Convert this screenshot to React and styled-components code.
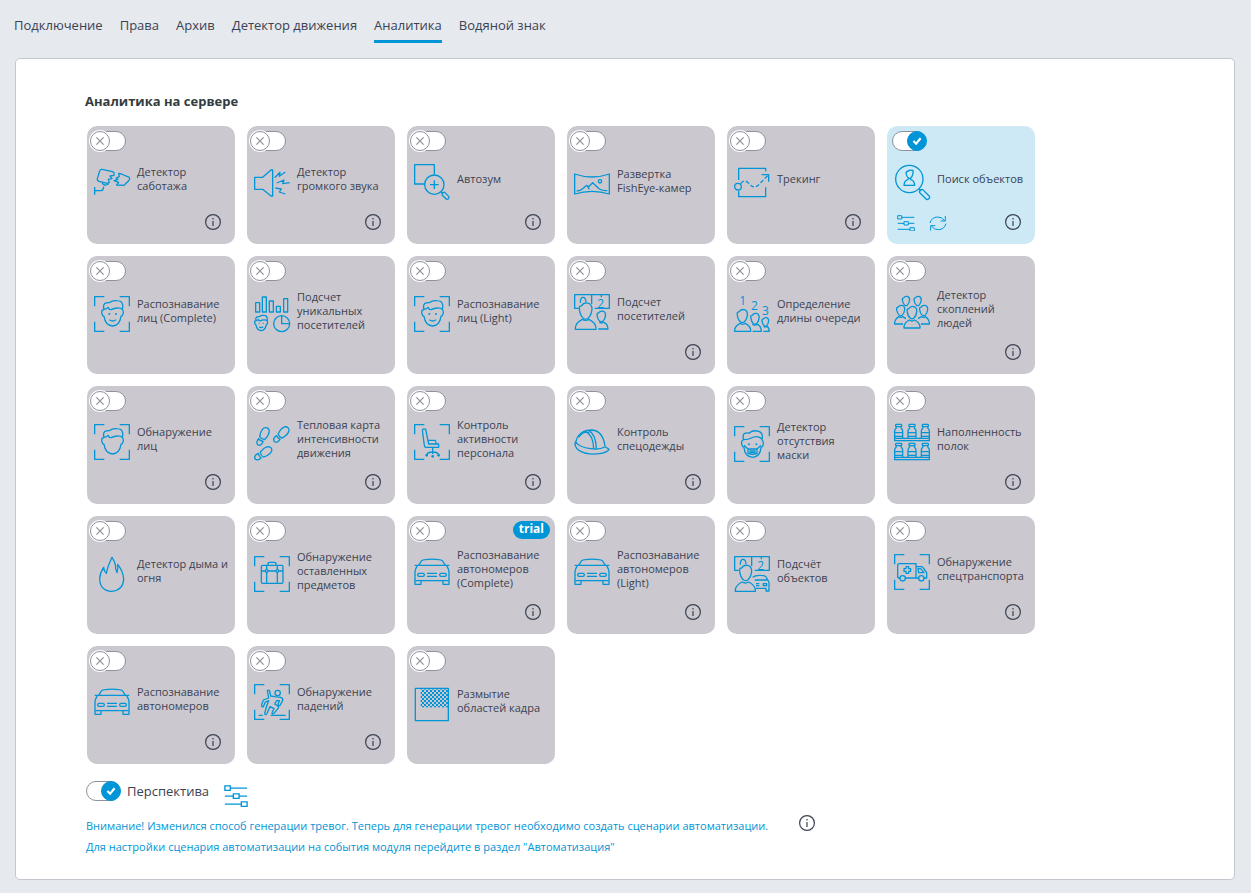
import { useState } from "react";
import styled, { createGlobalStyle, css } from "styled-components";

const v = {
    blue: "#0095d6",
    text: "#3b4252",
    heading: "#333c40",
    page: "#e6e9ee",
    card: "#cbc9cf",
    cardActive: "#cce9f5",
    border: "#c3c6cd",
    muted: "#8f929c",
    font: `"Open Sans", "Noto Sans", sans-serif`,
};

//#region ICONS
const Frame = () => (
    <path d="M2 31V2H31M77 2H106V31M106 77V106H77M31 106H2V77" />
);

const FaceOutline = () => (
    <>
        <path d="M30 40Q26 29 33 22Q40 19 46 20Q56 12 70 14Q84 15 86 26Q87 33 85 41" />
        <path d="M30 40Q38 39 42 34Q45 42 52 41Q60 37 70 36Q80 35 85 41" />
        <path d="M30 40Q22 42 23 50Q24 59 30 61Q34 88 56 90Q77 88 81 61Q87 59 88 50Q88 43 85 41" />
    </>
);

const Face = () => (
    <>
        <FaceOutline />
        <circle className="dot" cx="46" cy="54" r="3" />
        <circle className="dot" cx="66" cy="54" r="3" />
        <path d="M46 71Q56 79 66 71" />
    </>
);

const Head = ({ x, y, w }) => (
    <path
        transform={`translate(${x - w / 2} ${y}) scale(${w / 20})`}
        d="M1 10Q0 5 4 5Q7 0 13 1Q19 2 19 10Q18 19 13 23Q10 25 7 23Q2 19 1 10Z"
    />
);

const Body = ({ x, y, w, h }) => (
    <path
        d={`M${x} ${y + h}V${y + h - 4}Q${x + 1} ${y + h / 3} ${x + w * 0.34} ${y}Q${x + w / 2} ${y + 6} ${x + w * 0.66} ${y}Q${x + w - 1} ${y + h / 3} ${x + w} ${y + h - 4}V${y + h}Z`}
    />
);

const Board = () => (
    <>
        <path d="M14 43H2V2H106V43H62M53 2V30M82 2V10" />
        <path d="M19 26Q19 10 27 10Q35 10 36 24" />
        <text x="70" y="41" fontSize="36">2</text>
    </>
);

const Car = () => (
    <>
        <path d="M14 34L22 21Q26 17 34 17Q54 14 74 17Q82 17 86 21L94 34" />
        <path d="M2 34H106M10 36Q4 44 3 52V91H21V80H87V91H105V52Q104 44 98 36M3 80H21M87 80H105" />
        <rect x="11" y="58" width="20" height="9" rx="4" />
        <rect x="77" y="58" width="20" height="9" rx="4" />
        <path d="M39 58H69M39 67H69" />
    </>
);

const Bottle = ({ x, y }) => (
    <g transform={`translate(${x} ${y})`}>
        <rect x="4" y="1" width="18" height="7" rx="2" />
        <path d="M6 8Q6 13 3 16Q1 18 1 22V42M20 8Q20 13 23 16Q25 18 25 22V42M1 26H25M1 37H25" />
    </g>
);

const Footprint = ({ x, y, angle }) => (
    <g transform={`translate(${x} ${y}) rotate(${angle})`}>
        <path d="M-8 14Q-15 -4 -10 -15Q-2 -25 7 -17Q15 -6 9 14Q0 18 -8 14Z" />
        <path d="M-8 21Q0 24 8 21Q11 36 0 38Q-10 36 -8 21Z" />
    </g>
);

const icons = {
    camera: (
        <>
            <path d="M24 16Q19 15 17 21L10 44Q9 51 15 52L40 58L46 55L43 46L54 44L48 36L60 34V26L56 23Z" />
            <path d="M74 28L82 30L106 40Q109 45 104 50L90 64L68 63L74 55L60 50L72 46L66 42L76 38Z" />
            <path d="M2 69V92M2 80H22Q28 79 29 68M24 56Q30 68 44 60" />
        </>
    ),
    speaker: (
        <>
            <path d="M2 40H26L51 18H56V96H51L26 76H2Z" />
            <path d="M62 41L78 25L76 37L94 24M68 57L90 48L86 59L107 56M64 72L82 75L76 84L94 90" />
        </>
    ),
    zoom: (
        <>
            <path d="M32 60H2V2H61V32M61 49V75M48 62H74M81 84L86 89" />
            <circle cx="61" cy="62" r="29" />
            <rect x="-12" y="-5" width="24" height="11" rx="5" transform="translate(95 95) rotate(45)" />
        </>
    ),
    fisheye: (
        <>
            <path d="M2 24Q54 42 106 24V84Q54 68 2 84Z" />
            <circle cx="78" cy="46" r="5" />
            <path d="M8 75Q20 75 26 68L38 58L44 62L56 50L76 69Q86 75 100 74M40 60L46 70" />
        </>
    ),
    tracking: (
        <>
            <path d="M14 48V13H95V22M14 82V98H95V70M83 32H104V53" />
            <circle cx="12" cy="68" r="10" />
            <path strokeDasharray="4 2" d="M20 59Q32 44 44 58Q62 80 80 56L103 33" />
        </>
    ),
    search: (
        <>
            <circle cx="46" cy="45" r="41" />
            <path d="M36 27Q37 22 43 21Q46 17 52 19H57V29Q55 39 49 43H44Q37 38 36 27Z" />
            <path d="M42 43V47Q31 49 30 64H62Q61 49 50 47V43M74 74L82 81" />
            <rect x="-18" y="-6" width="36" height="13" rx="5" transform="translate(92 91) rotate(45)" />
        </>
    ),
    face: (
        <>
            <Frame />
            <Face />
        </>
    ),
    stats: (
        <>
            <path d="M5 48V20H17V48ZM25 48V3H37V48ZM46 48V15H58V48ZM67 48V31H79V48ZM89 48V8H101V48Z" />
            <g transform="translate(-12 50) scale(0.6)">
                <Face />
            </g>
            <circle cx="83" cy="83" r="24" />
            <path d="M83 59V83H107" />
        </>
    ),
    visitors: (
        <>
            <Board />
            <Head x={35} y={25} w={42} />
            <Body x={4} y={76} w={62} h={30} />
            <Head x={82} y={50} w={28} />
            <path d="M76 85Q82 89 88 85Q101 88 102 105H73" />
        </>
    ),
    queue: (
        <>
            <text x="16" y="28" fontSize="36">1</text>
            <text x="51" y="42" fontSize="36">2</text>
            <text x="84" y="56" fontSize="36">3</text>
            <Head x={25} y={39} w={34} />
            <Body x={2} y={82} w={48} h={24} />
            <Head x={63} y={51} w={28} />
            <path d="M55 85Q63 89 71 85Q81 90 82 106H56" />
            <Head x={94} y={64} w={22} />
            <path d="M89 91Q94 94 99 91Q105 94 106 106H88" />
        </>
    ),
    crowd: (
        <>
            <Head x={36} y={6} w={24} />
            <Head x={71} y={6} w={24} />
            <Head x={20} y={33} w={27} />
            <Head x={89} y={33} w={27} />
            <Head x={54} y={36} w={32} />
            <Body x={30} y={78} w={48} h={24} />
            <path d="M27 90H2V86Q4 74 14 68Q20 72 26 68L36 74M81 90H106V86Q104 74 94 68Q88 72 82 68L72 74" />
        </>
    ),
    faceBlank: (
        <>
            <Frame />
            <FaceOutline />
        </>
    ),
    footprints: (
        <>
            <Footprint x={31} y={30} angle={30} />
            <Footprint x={88} y={26} angle={46} />
            <Footprint x={35} y={84} angle={58} />
        </>
    ),
    chair: (
        <>
            <Frame />
            <path d="M25 18Q30 13 35 16L44 60H74V70H36Q32 70 31 64ZM42 49H64Q66 50 66 60M56 70V90M38 94Q39 84 56 84Q73 84 74 94" />
            <circle className="dot" cx="38" cy="94" r="4" />
            <circle className="dot" cx="56" cy="97" r="4" />
            <circle className="dot" cx="74" cy="94" r="4" />
        </>
    ),
    helmet: (
        <>
            <path d="M5 56Q8 38 22 27Q34 18 54 18Q86 20 93 66" />
            <path d="M5 52Q-2 68 16 80Q40 94 76 89Q98 86 105 76L93 68Q78 78 50 74Q16 70 5 54" />
            <path d="M34 22Q58 32 59 75M44 19Q66 30 67 75M14 40Q30 18 46 27" />
        </>
    ),
    mask: (
        <>
            <Frame />
            <path d="M29 41Q24 29 32 22Q40 20 46 21Q56 12 70 15Q84 17 85 30V40M29 41Q44 41 52 36Q66 28 78 35Q82 37 84 41" />
            <path d="M29 41Q21 44 23 55Q25 62 30 64Q32 92 56 94Q79 92 81 64Q88 62 88 53Q88 44 84 41" />
            <path d="M30 58L42 69H69L81 58M42 69V82Q56 88 69 82V69M46 75H65M46 80H65" />
            <circle className="dot" cx="45" cy="55" r="3" />
            <circle className="dot" cx="67" cy="55" r="3" />
        </>
    ),
    shelves: (
        <>
            {[0, 57].map((y) => (
                <g key={y}>
                    <Bottle x={1} y={y} />
                    <Bottle x={41} y={y} />
                    <Bottle x={81} y={y} />
                    <rect x="2" y={y + 43} width="104" height="7" />
                </g>
            ))}
        </>
    ),
    fire: (
        <path d="M53 106Q18 104 17 68Q18 50 29 34Q30 46 37 52Q40 34 54 4Q66 22 65 38L69 50Q73 36 71 25Q88 46 89 70Q87 104 53 106Z" />
    ),
    luggage: (
        <>
            <Frame />
            <path d="M42 28V22Q42 19 46 19H62Q66 19 66 22V28M22 45H34M42 45H66M74 45H87M38 28V41M38 49V82M70 28V41M70 49V82" />
            <rect x="22" y="28" width="65" height="54" rx="4" />
            <circle cx="38" cy="45" r="4" />
            <circle cx="70" cy="45" r="4" />
        </>
    ),
    car: <Car />,
    objects: (
        <>
            <Board />
            <Head x={35} y={26} w={40} />
            <Body x={4} y={78} w={60} h={28} />
            <path d="M56 64Q64 57 80 58Q94 58 97 64L101 72H62M101 72Q106 76 105 84V105H96V97H66M66 83H76M66 89H76M88 83H98V89H88Z" />
        </>
    ),
    ambulance: (
        <>
            <Frame />
            <path d="M18 72H14Q11 72 11 68V34Q11 29 16 29H66V72H34M66 38H82Q86 38 88 42L98 56V72H90M74 72H66M72 44H80L90 56H74Z" />
            <path d="M36 38H44V44H50V52H44V58H36V52H30V44H36Z" />
            <circle cx="26" cy="73" r="8" />
            <circle cx="82" cy="73" r="8" />
        </>
    ),
    fall: (
        <>
            <Frame />
            <circle cx="71" cy="27" r="8" />
            <path d="M40 20Q44 16 47 21L50 36L62 38L80 40Q88 42 86 50L78 64Q73 66 72 61L76 50L68 50L62 60L72 66Q76 70 70 76L60 88Q54 92 54 86L60 74L48 68L38 90Q34 96 32 88L38 66L44 50L34 54L28 68Q22 70 23 62L28 48L44 42Z" />
            <path d="M14 94H26M50 94H95" />
        </>
    ),
    blur: (
        <>
            <defs>
                <pattern id="checker" width="12" height="12" patternUnits="userSpaceOnUse">
                    <path className="dot" d="M0 0H6V6H0ZM6 6H12V12H6Z" />
                </pattern>
            </defs>
            <rect x="4" y="7" width="99" height="97" />
            <rect className="fill" x="20" y="10" width="82" height="54" />
        </>
    ),
};

const SlidersIcon = () => (
    <svg viewBox="0 0 54 50" aria-hidden="true">
        <path d="M2 2H14V12H2ZM14 7H52M2 25H21M21 20H34V30H21ZM34 25H52M2 43H39M39 38H52V48H39Z" />
    </svg>
);

const RefreshIcon = () => (
    <svg viewBox="0 0 54 50" aria-hidden="true">
        <path d="M3 24Q8 7 25 6Q39 5 47 17M49 3V18H35M51 26Q46 43 29 44Q15 45 7 33M5 47V32H19" />
    </svg>
);
//#endregion

//#region DATA
const tabs = ["Подключение", "Права", "Архив", "Детектор движения", "Аналитика", "Водяной знак"];

const modules = [
    { title: "Детектор саботажа", icon: "camera", info: true },
    { title: "Детектор громкого звука", icon: "speaker", info: true },
    { title: "Автозум", icon: "zoom", info: true },
    { title: "Развертка FishEye-камер", icon: "fisheye" },
    { title: "Трекинг", icon: "tracking", info: true },
    { title: "Поиск объектов", icon: "search", info: true, enabled: true },
    { title: "Распознавание лиц (Complete)", icon: "face" },
    { title: "Подсчет уникальных посетителей", icon: "stats" },
    { title: "Распознавание лиц (Light)", icon: "face" },
    { title: "Подсчет посетителей", icon: "visitors", info: true },
    { title: "Определение длины очереди", icon: "queue" },
    { title: "Детектор скоплений людей", icon: "crowd", info: true },
    { title: "Обнаружение лиц", icon: "faceBlank", info: true },
    { title: "Тепловая карта интенсивности движения", icon: "footprints", info: true },
    { title: "Контроль активности персонала", icon: "chair", info: true },
    { title: "Контроль спецодежды", icon: "helmet", info: true },
    { title: "Детектор отсутствия\nмаски", icon: "mask" },
    { title: "Наполненность полок", icon: "shelves", info: true },
    { title: "Детектор дыма и огня", icon: "fire" },
    { title: "Обнаружение оставленных предметов", icon: "luggage" },
    { title: "Распознавание автономеров (Complete)", icon: "car", info: true, trial: true },
    { title: "Распознавание автономеров (Light)", icon: "car", info: true },
    { title: "Подсчёт объектов", icon: "objects" },
    { title: "Обнаружение спецтранспорта", icon: "ambulance", info: true },
    { title: "Распознавание автономеров", icon: "car", info: true },
    { title: "Обнаружение падений", icon: "fall", info: true },
    { title: "Размытие областей кадра", icon: "blur" },
];
//#endregion

function Switch({ id, checked, onChange }) {
    return (
        <SwitchBox>
            <SwitchInput id={id} type="checkbox" role="switch" checked={checked} onChange={onChange} />
            <Knob $on={checked}>
                <svg viewBox="0 0 20 20" aria-hidden="true">
                    {checked ? <path d="M6 10L9 13L14 7" /> : <path d="M6 6L14 14M14 6L6 14" />}
                </svg>
            </Knob>
        </SwitchBox>
    );
}

function InfoButton() {
    return (
        <Info type="button" aria-label="Информация">
            <svg viewBox="0 0 16 16" aria-hidden="true">
                <circle cx="8" cy="8" r="7.4" />
                <path d="M8 7V12M8 4V5.4" />
            </svg>
        </Info>
    );
}

function ModuleCard({ id, module, enabled, onToggle }) {
    return (
        <Card $active={enabled}>
            <CardHeader>
                <Switch id={id} checked={enabled} onChange={onToggle} />
                {module.trial && <Trial>trial</Trial>}
            </CardHeader>
            <CardBody>
                <ModuleIcon viewBox="0 0 108 108" aria-hidden="true">{icons[module.icon]}</ModuleIcon>
                <ModuleTitle htmlFor={id}>{module.title}</ModuleTitle>
            </CardBody>
            <CardFooter $info={module.info}>
                {enabled && (
                    <Tools>
                        <ToolButton type="button" aria-label="Настройки"><SlidersIcon /></ToolButton>
                        <ToolButton type="button" aria-label="Обновить"><RefreshIcon /></ToolButton>
                    </Tools>
                )}
                {module.info && <InfoButton />}
            </CardFooter>
        </Card>
    );
}

export default function App() {
    const [tab, setTab] = useState("Аналитика");
    const [enabled, setEnabled] = useState(modules.map((m) => Boolean(m.enabled)));
    const [perspective, setPerspective] = useState(true);

    const toggleModule = (index) => {
        setEnabled(enabled.map((value, i) => (i === index ? !value : value)));
    };

    return (
        <>
            <GlobalStyle />
            <Tabs>
                {tabs.map((name) => (
                    <Tab key={name} type="button" $active={name === tab} onClick={() => setTab(name)}>
                        {name}
                    </Tab>
                ))}
            </Tabs>
            <Panel>
                <Heading>Аналитика на сервере</Heading>
                <Grid>
                    {modules.map((module, i) => (
                        <ModuleCard
                            key={module.title}
                            id={`module-${i}`}
                            module={module}
                            enabled={enabled[i]}
                            onToggle={() => toggleModule(i)}
                        />
                    ))}
                </Grid>
                <Perspective>
                    <Switch id="perspective" checked={perspective} onChange={() => setPerspective(!perspective)} />
                    <PerspectiveLabel htmlFor="perspective">Перспектива</PerspectiveLabel>
                    <ToolButton type="button" $large aria-label="Настройки перспективы"><SlidersIcon /></ToolButton>
                </Perspective>
                <Notice>
                    <div>
                        <p>Внимание! Изменился способ генерации тревог. Теперь для генерации тревог необходимо создать сценарии автоматизации.</p>
                        <p>Для настройки сценария автоматизации на события модуля перейдите в раздел "Автоматизация"</p>
                    </div>
                    <InfoButton />
                </Notice>
            </Panel>
        </>
    );
}

//#region STYLED COMPONENTS
const GlobalStyle = createGlobalStyle`
*{
    box-sizing: border-box;
}
body{
    margin: 0;
    background: ${v.page};
    color: ${v.text};
    font-family: ${v.font};
}
button{
    padding: 0;
    border: none;
    background: none;
    color: inherit;
    font-family: inherit;
    cursor: pointer;
}
svg{
    display: block;
    fill: none;
}
`;
const Tabs = styled.nav`
    display: flex;
    gap: 17px;
    padding: 15px 14px;
`;
const Tab = styled.button`
    height: 28px;
    padding-bottom: 5px;
    font-size: 13px;
    line-height: 20px;
    border-bottom: 3px solid ${({ $active }) => ($active ? v.blue : "transparent")};
`;
const Panel = styled.main`
    margin: 0 16px 13px 15px;
    padding: 32px 70px 22px 69px;
    background: #fff;
    border: 1px solid ${v.border};
    border-radius: 5px;
`;
const Heading = styled.h1`
    margin: 0 0 15px;
    font-size: 13px;
    line-height: 20px;
    font-weight: 700;
    color: ${v.heading};
`;
const Grid = styled.div`
    display: grid;
    grid-template-columns: repeat(auto-fill, 148px);
    gap: 12px;
    max-width: 950px;
    padding-left: 2px;
`;
const Card = styled.section`
    display: flex;
    flex-direction: column;
    min-height: 118px;
    border-radius: 10px;
    background: ${({ $active }) => ($active ? v.cardActive : v.card)};
`;
const CardHeader = styled.div`
    display: flex;
    justify-content: space-between;
    align-items: flex-start;
    height: 32px;
    padding: 5px 5px 0;
`;
const CardBody = styled.div`
    flex: 1;
    display: flex;
    align-items: center;
    gap: 7px;
    padding: 0 4px 0 7px;
`;
const ModuleIcon = styled.svg`
    flex: none;
    width: 36px;
    height: 36px;
    margin-top: 6px;
    overflow: visible;
    stroke: ${v.blue};
    stroke-width: 1.3;
    stroke-linejoin: round;
    *{
        vector-effect: non-scaling-stroke;
    }
    .dot{
        fill: ${v.blue};
        stroke: none;
    }
    .fill{
        fill: url(#checker);
        stroke: none;
    }
    text{
        fill: ${v.blue};
        stroke: none;
    }
`;
const ModuleTitle = styled.label`
    flex: 1;
    font-size: 11px;
    line-height: 14px;
    white-space: pre-line;
`;
const CardFooter = styled.div`
    display: flex;
    align-items: center;
    min-height: ${({ $info }) => ($info ? "44px" : "40px")};
    padding: 0 14px 0 10px;
`;
const Tools = styled.div`
    display: flex;
    gap: 14px;
`;
const ToolButton = styled.button`
    width: ${({ $large }) => ($large ? "24px" : "18px")};
    margin-top: ${({ $large }) => ($large ? "10px" : "2px")};
    svg{
        width: 100%;
        stroke: ${v.blue};
        stroke-width: 3;
    }
`;
const Info = styled.button`
    flex: none;
    width: 16px;
    height: 16px;
    margin-left: auto;
    svg{
        overflow: visible;
        stroke: ${v.text};
        stroke-width: 1.2;
    }
`;
const Trial = styled.span`
    height: 18px;
    padding: 0 6px;
    border-radius: 9px;
    background: ${v.blue};
    color: #fff;
    font-size: 12px;
    line-height: 16px;
    font-weight: 700;
`;
const SwitchBox = styled.span`
    position: relative;
    display: block;
    width: 34px;
    height: 20px;
`;
const SwitchInput = styled.input`
    appearance: none;
    display: block;
    width: 34px;
    height: 20px;
    margin: 0;
    border: 1px solid ${v.muted};
    border-radius: 10px;
    background: #fff;
    cursor: pointer;
`;
const Knob = styled.span`
    position: absolute;
    top: 0;
    left: -2px;
    width: 20px;
    height: 20px;
    border: 1px solid ${v.muted};
    border-radius: 50%;
    background: #fff;
    box-shadow: 0 0 0 1px #fff;
    pointer-events: none;
    svg{
        width: 18px;
        height: 18px;
        stroke: ${v.muted};
        stroke-width: 1.4;
    }
    ${({ $on }) => $on && css`
        left: 15px;
        border-color: ${v.blue};
        background: ${v.blue};
        box-shadow: none;
        svg{
            stroke: #fff;
            stroke-width: 2.4;
        }
    `}
`;
const Perspective = styled.div`
    display: flex;
    align-items: center;
    height: 32px;
    margin-top: 11px;
    padding-left: 1px;
`;
const PerspectiveLabel = styled.label`
    margin: 0 15px 0 7px;
    font-size: 13px;
    line-height: 20px;
`;
const Notice = styled.div`
    display: flex;
    align-items: flex-start;
    gap: 31px;
    margin-top: 8px;
    padding-left: 1px;
    font-size: 11px;
    line-height: 21px;
    color: ${v.blue};
    p{
        margin: 0;
    }
    ${Info}{
        margin-left: 0;
    }
`;
//#endregion
